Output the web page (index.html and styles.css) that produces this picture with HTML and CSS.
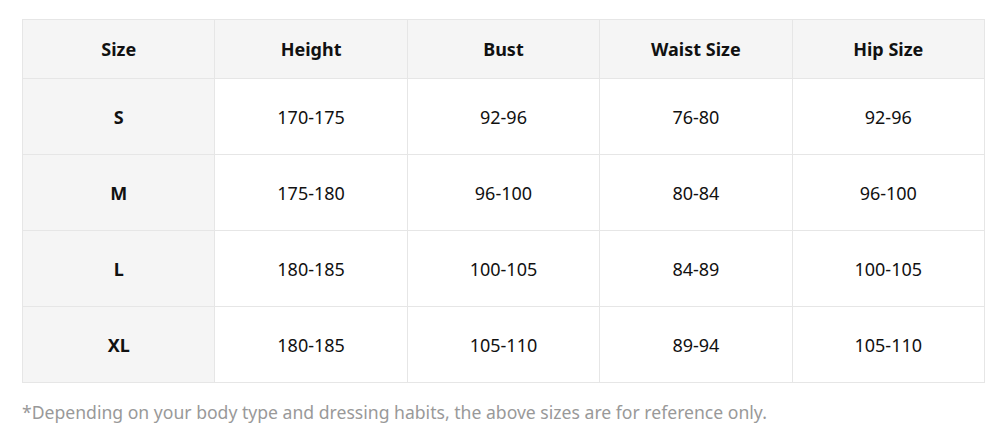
FILE: index.html
```html
<!DOCTYPE html>
<html>
<head>
<meta charset="utf-8">
<link rel="stylesheet" href="styles.css">
</head>
<body>
<div class="wrap">
  <table class="size-table">
    <thead>
      <tr><th>Size</th><th>Height</th><th>Bust</th><th>Waist Size</th><th>Hip Size</th></tr>
    </thead>
    <tbody>
      <tr><td class="sz">S</td><td>170-175</td><td>92-96</td><td>76-80</td><td>92-96</td></tr>
      <tr><td class="sz">M</td><td>175-180</td><td>96-100</td><td>80-84</td><td>96-100</td></tr>
      <tr><td class="sz">L</td><td>180-185</td><td>100-105</td><td>84-89</td><td>100-105</td></tr>
      <tr><td class="sz">XL</td><td>180-185</td><td>105-110</td><td>89-94</td><td>105-110</td></tr>
    </tbody>
  </table>
  <p class="note">*Depending on your body type and dressing habits, the above sizes are for reference only.</p>
</div>
</body>
</html>
```
FILE: styles.css
```css
html, body { margin: 0; padding: 0; background: #fff; }
body { font-family: "Noto Sans", "Open Sans", sans-serif; color: #111; }
.wrap { padding: 19px 0 0 22px; width: 963px; }
.size-table {
  width: 963px;
  border-collapse: collapse;
  table-layout: fixed;
  font-size: 18px;
}
.size-table th, .size-table td {
  border: 1px solid #e6e6e6;
  text-align: center;
  vertical-align: middle;
  padding: 0;
}
.size-table th {
  height: 58px;
  background: #f5f5f5;
  font-weight: 700;
}
.size-table td { height: 75px; }
.size-table td.sz { background: #f5f5f5; font-weight: 700; }
.note {
  margin: 17px 0 0;
  font-size: 17.6px;
  line-height: 24px;
  color: #999;
}
```
